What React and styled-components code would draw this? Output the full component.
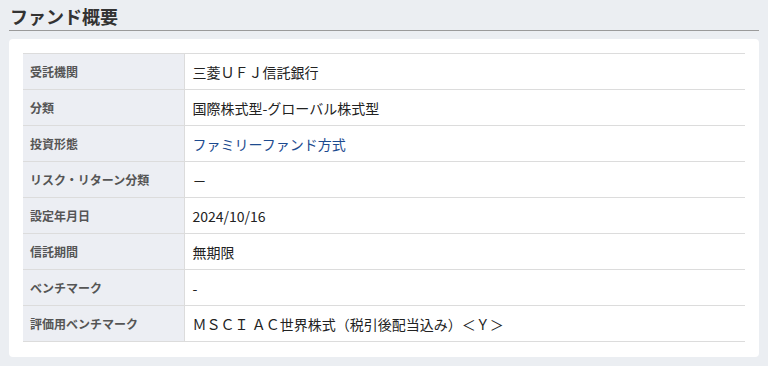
import React from "react";
import styled, { createGlobalStyle } from "styled-components";

const Global = createGlobalStyle`
  html, body { margin: 0; padding: 0; background: #ebeef2; }
  body { font-family: "Noto Sans CJK JP", "Noto Sans", sans-serif; }
`;

const Page = styled.div`
  padding: 0 9px;
  width: 768px;
  box-sizing: border-box;
`;

const Title = styled.h2`
  margin: 0;
  padding: 4px 0 0 1px;
  height: 26px;
  line-height: 24px;
  font-size: 18px;
  font-weight: 700;
  color: #333;
  border-bottom: 1px solid #9a9a9a;
`;

const Card = styled.section`
  margin-top: 8px;
  background: #fff;
  border-radius: 4px;
  padding: 14px 14px 15px;
`;

const Table = styled.table`
  width: 100%;
  border-collapse: collapse;
`;

const Row = styled.tr`
  height: 36px;
  border-top: 1px solid #dcdcdc;
  border-bottom: 1px solid #dcdcdc;
`;

const Label = styled.th`
  width: 161px;
  box-sizing: border-box;
  padding: 0 0 0 7px;
  text-align: left;
  background: #eceef3;
  border-right: 1px solid #dcdcdc;
  font-size: 12px;
  font-weight: 700;
  color: #555;
`;

const Value = styled.td`
  padding: 0 0 0 8px;
  font-size: 14px;
  color: ${(p) => (p.$link ? "#1d4b8f" : "#222")};
`;

const rows = [
  ["受託機関", "三菱ＵＦＪ信託銀行"],
  ["分類", "国際株式型-グローバル株式型"],
  ["投資形態", "ファミリーファンド方式", true],
  ["リスク・リターン分類", "－"],
  ["設定年月日", "2024/10/16"],
  ["信託期間", "無期限"],
  ["ベンチマーク", "-"],
  ["評価用ベンチマーク", "ＭＳＣＩ ＡＣ世界株式（税引後配当込み）＜Ｙ＞"],
];

export default function App() {
  return (
    <Page>
      <Global />
      <Title>ファンド概要</Title>
      <Card>
        <Table>
          <tbody>
            {rows.map(([k, v, link]) => (
              <Row key={k}>
                <Label>{k}</Label>
                <Value $link={link}>{v}</Value>
              </Row>
            ))}
          </tbody>
        </Table>
      </Card>
    </Page>
  );
}
